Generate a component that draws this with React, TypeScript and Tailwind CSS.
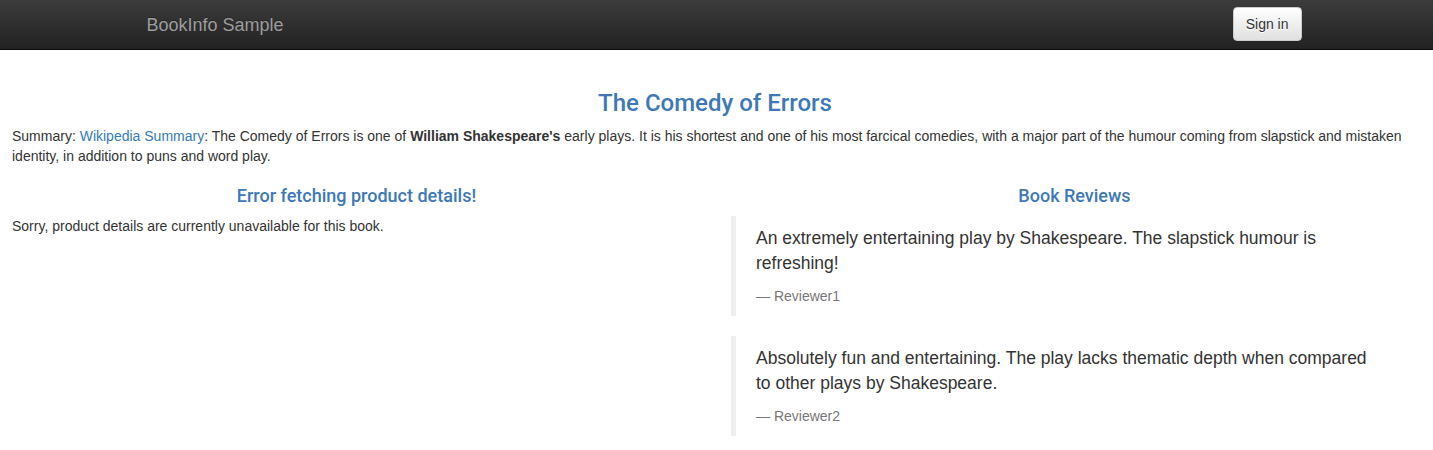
const reviews = [
  {
    text: "An extremely entertaining play by Shakespeare. The slapstick humour is refreshing!",
    reviewer: "Reviewer1",
  },
  {
    text: "Absolutely fun and entertaining. The play lacks thematic depth when compared to other plays by Shakespeare.",
    reviewer: "Reviewer2",
  },
];

function Navbar() {
  return (
    <nav className="h-[50px] border-b border-[#080808] bg-gradient-to-b from-[#3c3c3c] to-[#222222]">
      <div className="mx-auto flex h-[49px] w-[1170px] items-start justify-between">
        <a className="px-[15px] py-[15px] text-[18px] leading-[20px] text-[#9d9d9d] [text-shadow:0_-1px_0_rgba(0,0,0,0.25)]">
          BookInfo Sample
        </a>
        <button className="mt-[7px] h-[34px] rounded-[4px] border border-[#cccccc] bg-gradient-to-b from-white to-[#e0e0e0] px-3 text-[14px] leading-[20px] text-[#333] shadow-[inset_0_1px_0_rgba(255,255,255,0.15),0_1px_1px_rgba(0,0,0,0.075)] [text-shadow:0_1px_0_#fff]">
          Sign in
        </button>
      </div>
    </nav>
  );
}

function Review({ text, reviewer }: { text: string; reviewer: string }) {
  return (
    <blockquote className="mb-5 border-l-[5px] border-[#eeeeee] px-5 py-[10px]">
      <p className="mb-[10px] max-w-[625px] text-[17.5px] leading-[25px] text-[#333]">{text}</p>
      <small className="block text-[14px] leading-[20px] text-[#777]">
        {"\u2014\u00a0"}
        {reviewer}
      </small>
    </blockquote>
  );
}

export default function App() {
  return (
    <div className="min-h-[450px] bg-white font-['Liberation_Sans',Arial,sans-serif] text-[14px] leading-[20px] text-[#333]">
      <Navbar />
      <div className="pl-3 pr-[15px] pt-5">
        <h3 className="mt-5 mb-[10px] text-center font-['Roboto',sans-serif] text-[24px] leading-[26.4px] font-medium text-[#3d78b8]">
          The Comedy of Errors
        </h3>
        <p className="mb-[10px]">
          Summary: <a className="text-[#337ab7]">Wikipedia Summary</a>: The Comedy of Errors is one of{" "}
          <b>William Shakespeare's</b> early plays. It is his shortest and one of his most farcical comedies, with a
          major part of the humour coming from slapstick and mistaken identity, in addition to puns and word play.
        </p>
        <div className="grid grid-cols-[689px_1fr] gap-[30px]">
          <div>
            <h4 className="mt-[10px] mb-[10px] text-center font-['Roboto',sans-serif] text-[18px] leading-[19.8px] font-medium text-[#3d78b8]">
              Error fetching product details!
            </h4>
            <p>Sorry, product details are currently unavailable for this book.</p>
          </div>
          <div>
            <h4 className="mt-[10px] mb-[10px] text-center font-['Roboto',sans-serif] text-[18px] leading-[19.8px] font-medium text-[#3d78b8]">
              Book Reviews
            </h4>
            {reviews.map((r) => (
              <Review key={r.reviewer} text={r.text} reviewer={r.reviewer} />
            ))}
          </div>
        </div>
      </div>
    </div>
  );
}
